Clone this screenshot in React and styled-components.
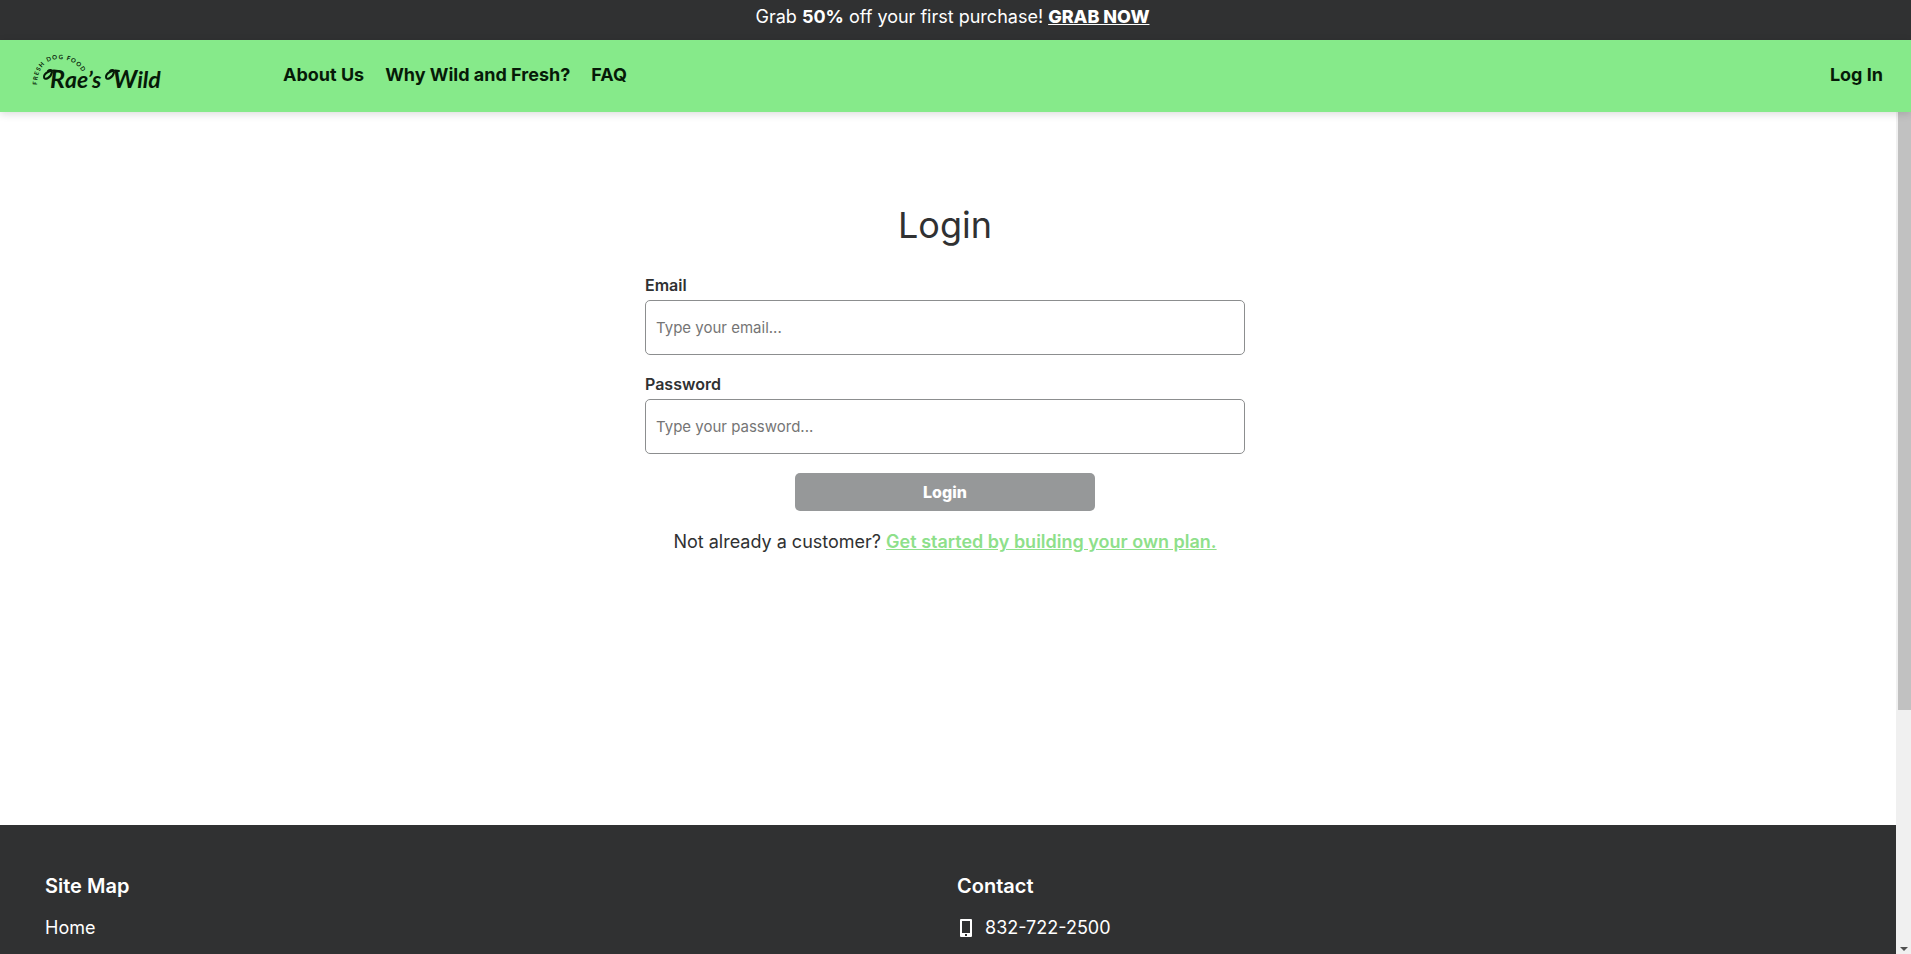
import React, { useState } from "react";
import styled, { createGlobalStyle } from "styled-components";

const GlobalStyle = createGlobalStyle`
  * {
    box-sizing: border-box;
  }

  body {
    margin: 0;
    color: #303132;
    background: #fff;
    font-family: Inter, "Liberation Sans", sans-serif;
    font-size: 18px;
    line-height: 24px;
  }
`;

const Page = styled.div`
  display: flex;
  flex-direction: column;
  height: 100vh;
  overflow: hidden;
`;

const Banner = styled.div`
  padding: 5px 6px 11px 0;
  color: #fff;
  background: #303132;
  text-align: center;

  a {
    color: inherit;
    font-weight: 800;
  }
`;

const Header = styled.header`
  display: flex;
  align-items: center;
  height: 72px;
  flex-shrink: 0;
  padding: 0 28px 2px 30px;
  background: #86ea8a;
  box-shadow: 0 2px 8px rgba(0, 0, 0, 0.14);
  z-index: 1;
`;

const LogoLink = styled.a`
  display: flex;
  width: 253px;
  color: #061a08;
`;

const Nav = styled.nav`
  display: flex;
  flex: 1;
  gap: 21px;
`;

const NavLink = styled.a`
  color: #061a08;
  font-weight: 700;
  text-decoration: none;
`;

const Body = styled.div`
  display: flex;
  flex: 1;
  min-height: 0;
`;

const Content = styled.div`
  display: flex;
  flex: 1;
  flex-direction: column;
`;

const Main = styled.main`
  display: flex;
  flex: 1;
  flex-direction: column;
  align-items: center;
  padding: 90px 6px 0 0;
`;

const Title = styled.h1`
  margin: 0 0 27px;
  font-size: 36px;
  font-weight: 400;
  line-height: 46px;
`;

const Form = styled.form`
  display: flex;
  flex-direction: column;
  width: 600px;
  max-width: 100%;
`;

const Field = styled.div`
  display: flex;
  flex-direction: column;
  margin-bottom: 19px;
`;

const Label = styled.label`
  margin-bottom: 5px;
  font-size: 16px;
  font-weight: 600;
  line-height: 20px;
`;

const Input = styled.input`
  height: 55px;
  padding: 0 10px;
  border: 1px solid #8c8e8f;
  border-radius: 5px;
  font-family: inherit;
  font-size: 15px;

  &::placeholder {
    color: #757575;
  }
`;

const SubmitButton = styled.button`
  align-self: center;
  width: 50%;
  height: 38px;
  border: 0;
  border-radius: 5px;
  color: #fff;
  background: #969899;
  font-family: inherit;
  font-size: 16px;
  font-weight: 800;
`;

const SignUp = styled.p`
  margin: 19px 0 0;
  text-align: center;

  a {
    color: #8ee08a;
    font-weight: 600;
  }
`;

const Footer = styled.footer`
  display: grid;
  grid-template-columns: 1fr 1fr;
  column-gap: 18px;
  padding: 49px 45px 14px;
  color: #fff;
  background: #303132;
`;

const FooterTitle = styled.h2`
  margin: 0 0 18px;
  font-size: 20px;
  font-weight: 600;
  line-height: 24px;
`;

const FooterLink = styled.a`
  display: flex;
  align-items: center;
  gap: 10px;
  color: inherit;
  text-decoration: none;
`;

const Scrollbar = styled.div`
  display: flex;
  flex-direction: column;
  justify-content: space-between;
  align-items: flex-end;
  width: 15px;
  background: #f0f0f0;
`;

const Thumb = styled.div`
  width: 13px;
  height: 71%;
  background: #c1c1c1;
`;

const Arrow = styled.div`
  margin: 0 3px 3px 0;
  border: 4px solid transparent;
  border-top-color: #505050;
  border-bottom: 0;
`;

const Logo = () => (
  <svg width="136" height="48" viewBox="0 -6 136 48" fill="none" role="img" aria-label="Rae's Wild">
    <path id="arc" d="M7 28 C7 10 18 2 29 2 C40 2 48 7 53 16" />
    <text fill="currentColor" fontFamily="Lato, sans-serif" fontSize="6" fontWeight="700" letterSpacing="1">
      <textPath href="#arc">FRESH DOG FOOD</textPath>
    </text>
    <g fill="currentColor" fontFamily="Lato, sans-serif" fontStyle="italic" fontWeight="700" fontSize="23">
      <text x="20" y="31">
        <tspan fontSize="25">R</tspan>ae’s
      </text>
      <text x="83" y="31">
        <tspan fontSize="25">W</tspan>ild
      </text>
    </g>
    <g stroke="currentColor" strokeWidth="2" strokeLinecap="round">
      <path d="M28 14 C21 12 14 16 14 20 C14 24 21 21 22 15 C22 13 20 12 18 14" />
      <path d="M89 14 C83 12 76 16 76 20 C76 24 83 21 84 15 C84 13 82 12 80 14" />
    </g>
  </svg>
);

const PhoneIcon = () => (
  <svg width="18" height="20" viewBox="0 0 18 20" fill="none" aria-hidden="true">
    <path
      fill="currentColor"
      fillRule="evenodd"
      d="M4 1h10a1 1 0 0 1 1 1v16a1 1 0 0 1-1 1H4a1 1 0 0 1-1-1V2a1 1 0 0 1 1-1Zm1 2v12h8V3H5Zm3 13v2h2v-2H8Z"
    />
  </svg>
);

const App = () => {
  const [formData, setFormData] = useState({ email: "", password: "" });

  const handleChange = (e) => {
    const { name, value } = e.target;
    setFormData({ ...formData, [name]: value });
  };

  const handleSubmit = (e) => {
    e.preventDefault();
  };

  return (
    <Page>
      <GlobalStyle />
      <Banner>
        Grab <b>50%</b> off your first purchase! <a href="#grab">GRAB NOW</a>
      </Banner>

      <Header>
        <LogoLink href="#home">
          <Logo />
        </LogoLink>
        <Nav>
          <NavLink href="#about">About Us</NavLink>
          <NavLink href="#why">Why Wild and Fresh?</NavLink>
          <NavLink href="#faq">FAQ</NavLink>
        </Nav>
        <NavLink href="#login">Log In</NavLink>
      </Header>

      <Body>
        <Content>
          <Main>
            <Title>Login</Title>
            <Form onSubmit={handleSubmit}>
              <Field>
                <Label htmlFor="email">Email</Label>
                <Input
                  id="email"
                  name="email"
                  type="email"
                  placeholder="Type your email..."
                  value={formData.email}
                  onChange={handleChange}
                />
              </Field>
              <Field>
                <Label htmlFor="password">Password</Label>
                <Input
                  id="password"
                  name="password"
                  type="password"
                  placeholder="Type your password..."
                  value={formData.password}
                  onChange={handleChange}
                />
              </Field>
              <SubmitButton type="submit" disabled={!formData.email || !formData.password}>
                Login
              </SubmitButton>
            </Form>
            <SignUp>
              Not already a customer? <a href="#plan">Get started by building your own plan.</a>
            </SignUp>
          </Main>

          <Footer>
            <div>
              <FooterTitle>Site Map</FooterTitle>
              <FooterLink href="#home">Home</FooterLink>
            </div>
            <div>
              <FooterTitle>Contact</FooterTitle>
              <FooterLink href="tel:8327222500">
                <PhoneIcon />
                832-722-2500
              </FooterLink>
            </div>
          </Footer>
        </Content>

        <Scrollbar aria-hidden="true">
          <Thumb />
          <Arrow />
        </Scrollbar>
      </Body>
    </Page>
  );
};

export default App;
